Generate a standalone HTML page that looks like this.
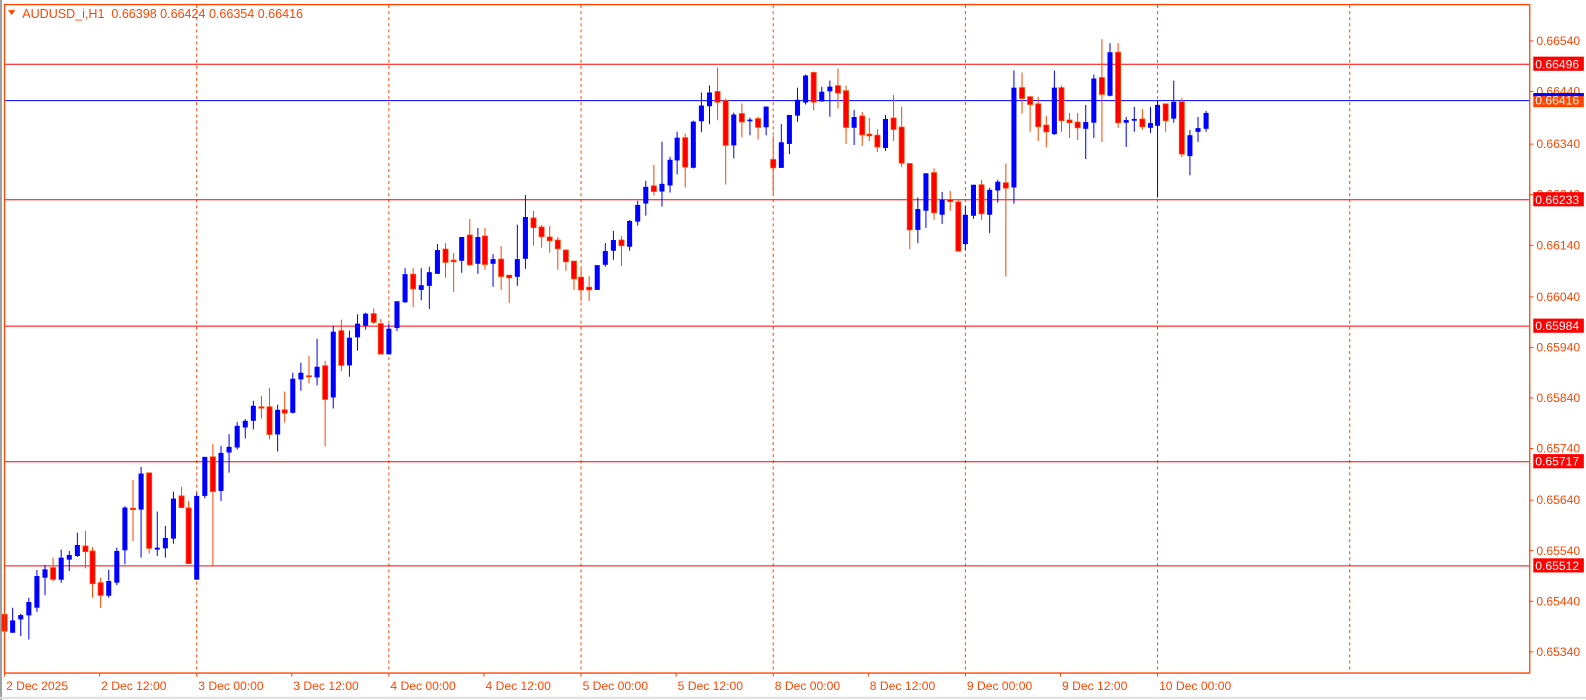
<!DOCTYPE html>
<html><head><meta charset="utf-8"><style>
html,body{margin:0;padding:0;background:#fff;width:1586px;height:700px;overflow:hidden}
svg{display:block}
text{font-family:"Liberation Sans",sans-serif;font-size:12px}
</style></head><body>
<svg id="s" width="1586" height="700" xmlns="http://www.w3.org/2000/svg">
<rect x="0" y="0" width="1586" height="700" fill="#fff"/>
<g transform="scale(1.0114)">
<rect x="0" y="0" width="2" height="700" fill="#a0a0a0"/>
<rect x="0" y="689" width="1586" height="2" fill="#e0e0e0"/>
<g id="grid" stroke="#ff4500" stroke-width="1" stroke-dasharray="3,3"></g>
<g id="hl"></g>
<g id="c"></g>
<g id="frame" stroke="#ff4500" stroke-width="1.3" fill="none">
<line x1="4" y1="4.5" x2="1512" y2="4.5"/>
<line x1="4.5" y1="4" x2="4.5" y2="665"/>
<line x1="1512.5" y1="4" x2="1512.5" y2="665"/>
<line x1="4" y1="665.5" x2="1513" y2="665.5"/>
</g>
<g id="ax" fill="#ff4500"></g>
<path d="M8 10 L15 10 L11.5 15 Z" fill="#ff4500"/>
<text x="22" y="18" fill="#ff4500" style="font-size:12.4px">AUDUSD_i,H1&#160; 0.66398 0.66424 0.66354 0.66416</text>
</g>
</svg>
<script>
const NS="http://www.w3.org/2000/svg";
function el(p,t,a,txt){const e=document.createElementNS(NS,t);for(const k in a)e.setAttribute(k,a[k]);if(txt)e.textContent=txt;p.appendChild(e);return e;}
const grid=document.getElementById('grid');
[194,384,574,764,954,1144,1334].forEach(x=>el(grid,'line',{x1:x+.5,y1:5,x2:x+.5,y2:665}));
const hl=document.getElementById('hl');
[63,197,322,456,559].forEach(y=>el(hl,'line',{x1:5,y1:y+.5,x2:1512,y2:y+.5,stroke:'#ff0000','stroke-width':1}));
el(hl,'line',{x1:5,y1:99.5,x2:1512,y2:99.5,stroke:'#0000ff','stroke-width':1});
const ax=document.getElementById('ax');
const ticks=[["0.66540",40],["0.66440",90],["0.66340",142],["0.66240",192],["0.66140",242],["0.66040",293],["0.65940",343],["0.65840",393],["0.65740",443],["0.65640",494],["0.65540",544],["0.65440",594],["0.65340",644]];
ticks.forEach(([t,y])=>{el(ax,'rect',{x:1512,y:y,width:4,height:1});el(ax,'text',{x:1519,y:y+4.5},t);});
const lab=[["0.66496",63,"#ff0000"],["0.66233",197,"#ff0000"],["0.65984",322,"#ff0000"],["0.65717",456,"#ff0000"],["0.65512",559,"#ff0000"],["0.66416",99,"#ff4500"]];
lab.forEach(([t,y,c])=>{el(ax,'rect',{x:1516,y:y-7,width:50,height:14,fill:c});el(ax,'text',{x:1518,y:y+4.5,fill:'#fff'},t);});
el(ax,'rect',{x:1516,y:92,width:50,height:3,fill:'#0000ff'});
const tl=[["2 Dec 2025",6],["2 Dec 12:00",100],["3 Dec 00:00",196],["3 Dec 12:00",290],["4 Dec 00:00",386],["4 Dec 12:00",480],["5 Dec 00:00",576],["5 Dec 12:00",670],["8 Dec 00:00",766],["8 Dec 12:00",860],["9 Dec 00:00",956],["9 Dec 12:00",1050],["10 Dec 00:00",1146]];
tl.forEach(([t,x])=>{el(ax,'rect',{x:x-2,y:665,width:1,height:4});el(ax,'text',{x:x,y:682},t);});
const z4=[[0,'R',1000,1050,970,1050],[1,'B',1018,1055,980,1055],[2,'B',1002,1015,998,1065],[3,'B',963,1003,950,1075],[4,'B',885,980,867,992],[5,'B',865,890,852,942],[6,'R',860,895,830,902],[7,'B',830,896,806,905],[8,'B',822,836,810,870],[9,'B',792,825,755,828],[10,'R',795,812,750,862],[11,'R',810,908,798,950],[12,'R',905,943,890,980],[13,'B',900,944,866,950],[14,'B',810,905,800,912],[15,'B',680,808,676,850],[16,'R',682,686,597,780],[17,'B',578,686,558,830],[18,'R',576,802,576,818],[19,'B',800,806,692,825],[20,'B',771,802,735,830],[21,'B',653,773,632,788],[22,'R',645,680,618,680],[23,'R',681,848,660,848],[24,'B',645,896,636,896],[25,'B',528,645,528,652],[26,'R',528,632,489,855],[27,'B',516,630,495,660],[28,'B',498,515,460,575],[29,'B',435,500,424,506],[30,'B',420,440,415,473],[31,'B',375,420,360,446],[32,'R',378,382,345,413],[33,'R',378,461,321,476],[34,'B',387,461,372,512],[35,'R',387,397,332,425],[36,'B',294,396,276,398],[37,'B',276,296,246,330],[38,'R',285,287,225,308],[39,'B',258,290,174,314],[40,'R',255,356,240,497],[41,'B',153,350,136,383],[42,'R',150,254,117,271],[43,'B',171,254,150,288],[44,'B',129,170,101,210],[45,'B',99,135,96,147],[46,'R',99,125,84,130],[47,'R',129,220,115,220],[48,'B',144,221,130,221]];
const z5=[[49,'B',723,803,723,812],[50,'B',642,726,624,728],[51,'R',642,686,624,740],[52,'B',675,689,624,720],[53,'B',636,677,620,746],[54,'B',570,641,552,641],[55,'R',567,607,549,653],[56,'R',600,605,579,695],[57,'B',531,602,531,638],[58,'R',525,614,477,617],[59,'B',531,611,504,641],[60,'R',528,613,504,629],[61,'B',597,611,582,680],[62,'R',597,649,558,689],[63,'R',645,653,645,728],[64,'B',597,650,494,677],[65,'B',471,596,405,626],[66,'R',474,503,453,557],[67,'R',501,530,495,563],[68,'R',531,542,498,578],[69,'R',540,566,531,629],[70,'R',570,605,567,632],[71,'R',603,656,603,689],[72,'R',651,689,626,722],[73,'R',681,689,648,722],[74,'B',615,689,615,689],[75,'B',573,614,549,620],[76,'B',540,572,513,599],[77,'R',540,557,528,617],[78,'B',483,560,480,572],[79,'B',435,485,423,497],[80,'B',381,431,363,467],[81,'R',378,395,315,407],[82,'B',372,395,246,440],[83,'B',300,377,291,398],[84,'B',234,302,216,344],[85,'R',234,322,222,383],[86,'B',186,324,183,326],[87,'B',138,185,99,218],[88,'B',99,140,78,194],[89,'R',96,128,24,182],[90,'R',123,257,117,374],[91,'B',165,257,159,296],[92,'R',162,187,132,233],[93,'B',180,185,174,227],[94,'R',177,203,171,239],[95,'B',141,203,141,227]];
const z6=[[96,'R',387,412,318,488],[97,'B',336,412,282,412],[98,'B',255,341,255,371],[99,'B',210,257,174,275],[100,'B',138,218,135,224],[101,'R',129,217,126,242],[102,'B',186,215,171,215],[103,'B',171,185,153,260],[104,'R',168,190,117,236],[105,'R',183,292,168,341],[106,'B',261,293,240,344],[107,'R',258,314,246,347],[108,'R',312,317,264,332],[109,'R',315,350,297,365],[110,'B',267,353,255,362],[111,'R',264,298,195,332],[112,'R',291,398,231,410],[113,'R',399,596,399,653],[114,'B',534,596,500,635],[115,'B',428,539,428,590],[116,'R',426,545,413,566],[117,'B',506,551,483,578],[118,'R',506,512,480,539],[119,'R',513,659,506,659],[120,'B',551,638,524,656],[121,'B',462,554,462,563],[122,'R',462,548,447,566],[123,'B',477,551,471,605],[124,'B',453,479,447,515],[125,'R',456,472,399,734],[126,'B',174,470,123,518],[127,'R',174,206,129,251],[128,'R',201,224,198,305],[129,'R',222,290,201,332],[130,'R',285,305,258,350],[131,'B',174,312,123,314],[132,'R',174,272,168,305],[133,'R',270,278,249,323],[134,'R',276,293,249,329],[135,'B',276,296,225,386],[136,'B',147,278,135,323],[137,'R',144,194,30,335],[138,'B',69,198,42,200],[139,'R',69,278,42,293],[140,'B',270,278,261,350],[141,'B',267,272,231,305],[142,'R',267,290,237,299],[143,'B',279,293,231,308],[144,'B',225,287,212,500],[145,'R',222,272,222,305],[146,'B',216,266,153,278],[147,'R',216,371,204,380],[148,'B',315,377,300,434],[149,'B',294,305,261,335],[150,'B',249,296,243,305]];
const c=document.getElementById('c');
function draw(arr,f){arr.forEach(([i,t,a,b,h,l])=>{
 const x=Math.round(4.4+7.917*i);
 const yt=f(a),yb=f(b),yh=f(h),yl=f(l);
 const col=t==='B'?'#0000ff':'#ff4500';
 el(c,'rect',{x:x,y:yh,width:1,height:Math.max(1,yl-yh),fill:col});
 const hgt=Math.max(1,yb-yt);
 if(t==='B') el(c,'rect',{x:x-2,y:yt,width:5,height:hgt,fill:'#0000ff'});
 else el(c,'rect',{x:x-2,y:yt,width:5,height:hgt,fill:'#ff0000',stroke:'#ff4500','stroke-width':0.8});
});}
draw(z4,z=>322+(z-135)/3.03);
draw(z5,z=>63+(z-13)/3.023);
draw(z6,z=>63+(z-103)/3.0);
</script>
</body></html>
